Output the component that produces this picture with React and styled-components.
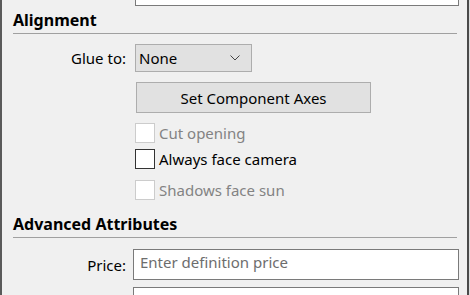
import React from "react";
import styled, { createGlobalStyle } from "styled-components";

const Global = createGlobalStyle`
  html, body {
    margin: 0;
    padding: 0;
    background: #f0f0f0;
    overflow: hidden;
  }
  body {
    font-family: "Noto Sans", "Open Sans", sans-serif;
    font-size: 15px;
    line-height: 20px;
    color: #000;
  }
`;

const Frame = styled.div`
  width: 470px;
  height: 295px;
  box-sizing: border-box;
  border-left: 2px solid #5a5a5a;
  border-right: 1px solid #dcdcdc;
  overflow: hidden;
`;

const Panel = styled.div`
  width: 467px;
  height: 295px;
  box-sizing: border-box;
  border-right: 2px solid #4a4a4a;
  padding: 0 8px 0 11px;
  display: flex;
  flex-direction: column;
`;

const Row = styled.div`
  display: flex;
  align-items: center;
  gap: ${(p) => p.$gap || 9}px;
  margin-top: ${(p) => p.$top || 0}px;
`;

const Label = styled.div`
  width: 113px;
  text-align: right;
  flex-shrink: 0;
`;

const TextInput = styled.input`
  flex: 1;
  height: 31px;
  box-sizing: border-box;
  border: 1px solid #7a7a7a;
  background: #fff;
  font: inherit;
  padding: 0 6px 5px;
  margin: 0;
  outline: none;
  &::placeholder {
    color: #6d6d6d;
  }
`;

const Clipped = styled.div`
  margin-top: -25px;
  margin-left: 122px;
  display: flex;
`;

const Heading = styled.div`
  font-weight: 700;
  font-size: 16px;
  padding: 0 0 3px 0;
  margin-right: 2px;
  border-bottom: 1px solid #a0a0a0;
  margin-top: ${(p) => p.$top}px;
`;

const Select = styled.div`
  width: 117px;
  height: 28px;
  box-sizing: border-box;
  border: 1px solid #adadad;
  background: #e1e1e1;
  display: flex;
  align-items: center;
  justify-content: space-between;
  padding: 0 11px 0 3px;
`;

const Button = styled.div`
  width: 235px;
  height: 31px;
  box-sizing: border-box;
  border: 1px solid #adadad;
  background: #e1e1e1;
  display: flex;
  align-items: center;
  justify-content: center;
  margin-left: 123px;
`;

const Check = styled.div`
  display: flex;
  align-items: center;
  gap: 4px;
  margin-left: 122px;
  margin-top: ${(p) => p.$top}px;
  color: ${(p) => (p.$disabled ? "#838383" : "#000")};
`;

const Box = styled.span`
  width: 20px;
  height: 20px;
  box-sizing: border-box;
  background: #fff;
  border: 1px solid ${(p) => (p.$disabled ? "#cccccc" : "#333333")};
  flex-shrink: 0;
`;

function Chevron() {
  return (
    <svg width="10" height="6" viewBox="0 0 10 6">
      <path d="M0.5 0.5 L5 5 L9.5 0.5" fill="none" stroke="#444" strokeWidth="1" />
    </svg>
  );
}

export default function App() {
  return (
    <>
      <Global />
      <Frame>
        <Panel>
          <Clipped>
            <TextInput readOnly />
          </Clipped>
          <Heading $top={4}>Alignment</Heading>
          <Row $top={10}>
            <Label>Glue to:</Label>
            <Select>
              <span>None</span>
              <Chevron />
            </Select>
          </Row>
          <Row $top={10}>
            <Button>Set Component Axes</Button>
          </Row>
          <Check $disabled $top={10}>
            <Box $disabled />
            Cut opening
          </Check>
          <Check $top={6}>
            <Box />
            Always face camera
          </Check>
          <Check $disabled $top={11}>
            <Box $disabled />
            Shadows face sun
          </Check>
          <Heading $top={14}>Advanced Attributes</Heading>
          <Row $top={11} $gap={7}>
            <Label>Price:</Label>
            <TextInput placeholder="Enter definition price" readOnly />
          </Row>
          <Row $top={7} $gap={7}>
            <Label />
            <TextInput placeholder="Enter definition size" readOnly />
          </Row>
        </Panel>
      </Frame>
    </>
  );
}
